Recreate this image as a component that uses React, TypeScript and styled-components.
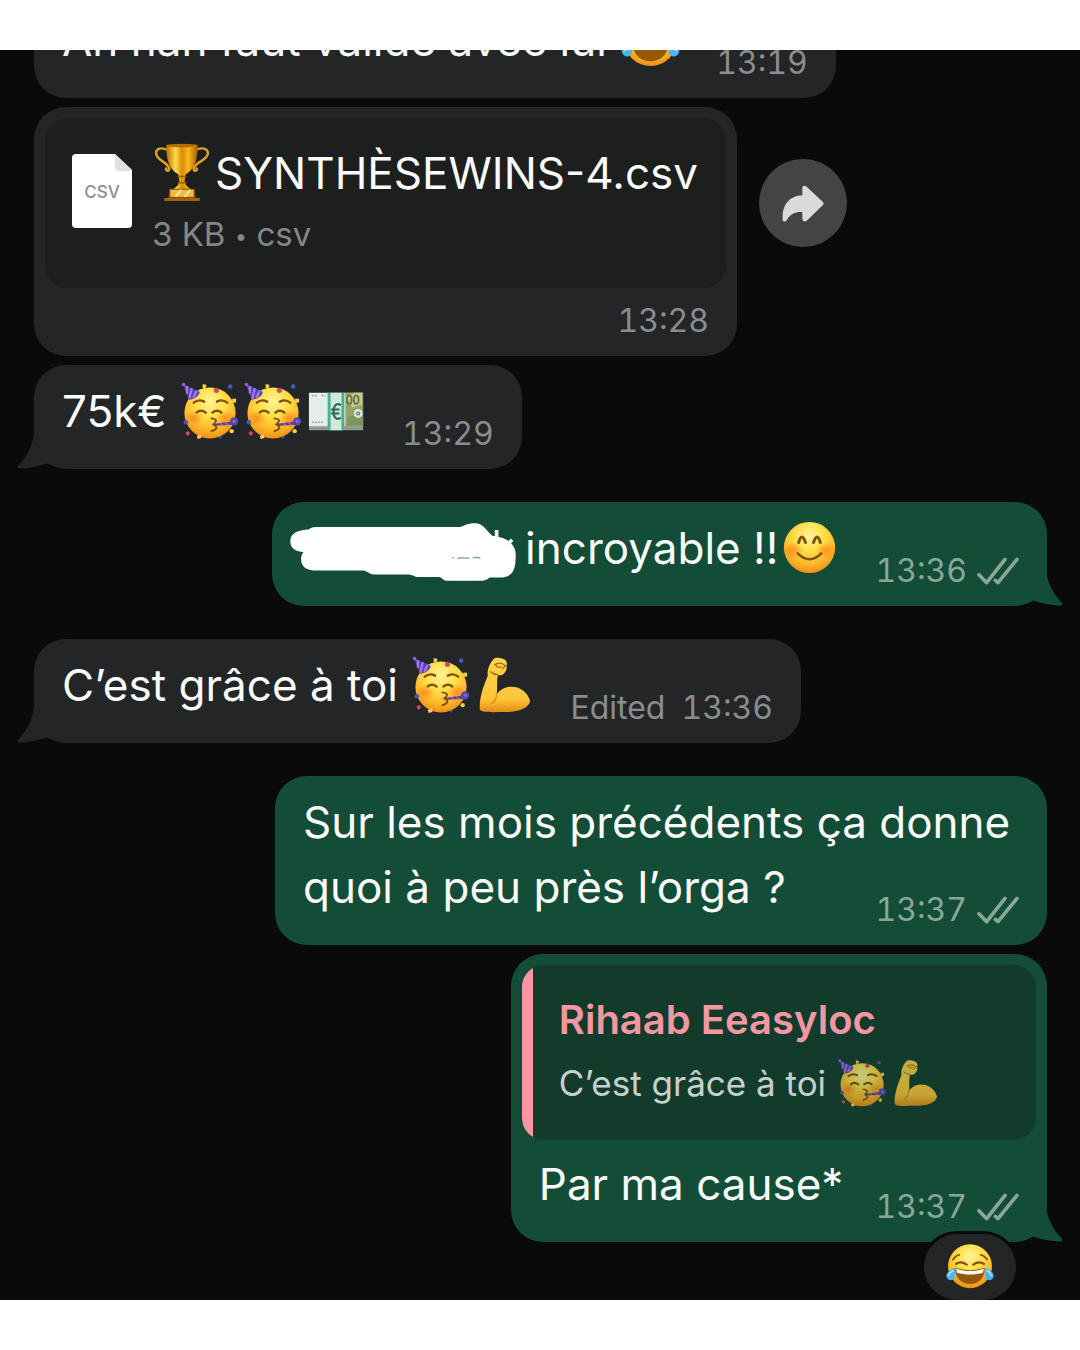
import React from "react";
import styled, { createGlobalStyle } from "styled-components";

const GlobalStyle = createGlobalStyle`
  *, *::before, *::after { box-sizing: border-box; }
  body {
    margin: 0;
    background: #fff;
    font-family: Inter, "Liberation Sans", sans-serif;
  }
  p, h2 { margin: 0; font-weight: 400; }
`;

type Side = "in" | "out";

const palette = {
  chat: "#0a0a0a",
  in: "#242526",
  out: "#144d37",
  inMeta: "#8b8c8d",
  outMeta: "#89a698",
};

const Page = styled.main`
  display: flex;
  flex-direction: column;
  height: 100vh;
  padding: 50px 0;
`;

const Chat = styled.section`
  flex: 1;
  min-height: 0;
  display: flex;
  flex-direction: column;
  justify-content: flex-end;
  padding: 0 33px 58px 34px;
  overflow: hidden;
  background: ${palette.chat};
`;

const Row = styled.div<{ $side: Side; $spaced?: boolean }>`
  flex: none;
  display: flex;
  align-items: flex-start;
  justify-content: ${(p) => (p.$side === "in" ? "flex-start" : "flex-end")};
  gap: 22px;
  margin-top: ${(p) => (p.$spaced ? 33 : 9)}px;
`;

const Bubble = styled.article<{ $side: Side }>`
  position: relative;
  max-width: 84%;
  border-radius: 32px;
  background: ${(p) => palette[p.$side]};
  color: #fafafa;
`;

const Line = styled.div<{ $afterBlock?: boolean }>`
  display: flex;
  align-items: flex-end;
  justify-content: space-between;
  gap: ${(p) => (p.$afterBlock ? 32 : 34)}px;
  padding: ${(p) => (p.$afterBlock ? 12 : 14)}px 28px 15px;
`;

const Text = styled.p`
  display: flex;
  align-items: center;
  padding-bottom: 10px;
  font-size: 44px;
  line-height: 65px;
  white-space: pre;
`;

const Paragraph = styled.div`
  max-width: 772px;
  padding: 14px 28px 25px;
  font-size: 44px;
  line-height: 65px;
`;

const FloatingMeta = styled.div`
  float: right;
  margin-top: 35px;
`;

const MetaRow = styled.footer<{ $side: Side }>`
  flex: none;
  display: flex;
  align-items: center;
  justify-content: flex-end;
  gap: ${(p) => (p.$side === "in" ? 16 : 10)}px;
  font-size: 32px;
  font-variant-numeric: tabular-nums;
  line-height: 40px;
  color: ${(p) => (p.$side === "in" ? palette.inMeta : palette.outMeta)};
`;

const FileMeta = styled.div`
  padding: 13px 28px 15px;
`;

const FileCard = styled.div`
  display: flex;
  gap: 20px;
  height: 170px;
  margin: 11px 11px 0;
  padding: 27px 28px 0 27px;
  border-radius: 22px;
  background: #1d1f1e;
`;

const FileBadge = styled.div`
  position: relative;
  flex: none;
  width: 60px;
  height: 74px;
  margin-top: 9px;

  svg { display: block; }
`;

const FileBadgeLabel = styled.span`
  position: absolute;
  inset: 0;
  font-size: 17px;
  font-weight: 500;
  line-height: 76px;
  text-align: center;
  color: #8d8f8f;
`;

const FileName = styled.h2`
  display: flex;
  align-items: center;
  height: 56px;
  font-size: 44px;
  line-height: 56px;
  white-space: nowrap;
`;

const FileInfo = styled.p`
  padding-top: 13px;
  font-size: 33px;
  line-height: 40px;
  color: #858686;
`;

const Dot = styled.span`
  font-size: 22px;
  vertical-align: 2px;
`;

const ForwardButton = styled.button`
  flex: none;
  display: grid;
  place-items: center;
  width: 88px;
  height: 88px;
  margin-top: 52px;
  padding: 0;
  border: 0;
  border-radius: 50%;
  background: #434446;
`;

const Quote = styled.blockquote`
  height: 175px;
  margin: 11px 11px 0;
  padding: 30px 90px 0 37px;
  border-radius: 22px;
  background: linear-gradient(to right, #fc95a2 11px, #123b2b 11px);
`;

const QuoteName = styled.p`
  font-size: 40px;
  font-weight: 600;
  line-height: 50px;
  color: #f497a2;
`;

const QuoteText = styled.p`
  display: flex;
  align-items: center;
  height: 64px;
  padding-top: 12px;
  font-size: 35px;
  line-height: 52px;
  white-space: pre;
  color: #fff;
  opacity: 0.76;
`;

const Reaction = styled.button`
  position: absolute;
  right: 28px;
  bottom: -61px;
  display: grid;
  place-items: center;
  width: 98px;
  height: 72px;
  padding: 0;
  border: 3px solid ${palette.chat};
  border-radius: 36px;
  background: #242626;
`;

const TailSvg = styled.svg<{ $side: Side }>`
  position: absolute;
  bottom: 0;
  ${(p) => (p.$side === "in" ? "left: -17px;" : "right: -16px; transform: scaleX(-1);")}
  fill: ${(p) => palette[p.$side]};
`;

const EmojiSvg = styled.svg`
  flex: none;
  display: block;
`;

const Scribble = styled.svg`
  flex: none;
  display: block;
  margin: 7px -4px 0 -11px;
`;

const Tail = ({ side }: { side: Side }) => (
  <TailSvg $side={side} width="48" height="41" viewBox="0 0 48 41" aria-hidden="true">
    <path d="M17 0C17 16 11 27 1 38C0 40 1 40.5 4 40.5C14 40 23 38 29.500 35.500L44 40L44 0Z" />
  </TailSvg>
);

const Ticks = () => (
  <svg width="42" height="28" viewBox="0 0 126 84" fill="none" stroke="currentColor" strokeWidth="11" strokeLinecap="round" strokeLinejoin="round" role="img" aria-label="Lu">
    <path d="M6 53L29 77L84 7" />
    <path d="M55 70L63 77L120 7" />
  </svg>
);

const Meta = ({ side, time, edited }: { side: Side; time: string; edited?: boolean }) => (
  <MetaRow $side={side}>
    {edited && <span>Edited</span>}
    <time>{time}</time>
    {side === "out" && <Ticks />}
  </MetaRow>
);

const FaceGradient = ({ id }: { id: string }) => (
  <defs>
    <radialGradient id={id} cx="50%" cy="28%" r="74%">
      <stop offset="0" stopColor="#fff39a" />
      <stop offset=".38" stopColor="#ffe04a" />
      <stop offset=".72" stopColor="#fdb92a" />
      <stop offset="1" stopColor="#ee8a12" />
    </radialGradient>
    <radialGradient id={`${id}-cheek`}>
      <stop offset="0" stopColor="#fb7a16" stopOpacity=".7" />
      <stop offset="1" stopColor="#fb7a16" stopOpacity="0" />
    </radialGradient>
  </defs>
);

const Party = ({ size = 63 }: { size?: number }) => {
  const id = React.useId();
  return (
    <EmojiSvg width={size} height={size} viewBox="0 0 64 64" role="img" aria-label="visage festif">
      <FaceGradient id={id} />
      <circle cx="31.500" cy="33.500" r="26" fill={`url(#${id})`} />
      <ellipse cx="15" cy="39" rx="10" ry="8" fill={`url(#${id}-cheek)`} />
      <ellipse cx="48" cy="39" rx="10" ry="8" fill={`url(#${id}-cheek)`} />
      <path d="M4 4L21 12C21 16 15 20 10 20Z" fill="#5046bd" />
      <path d="M8 6L8 14M13 8.500L10.500 19M18 11L14.500 18" stroke="#b673e4" strokeWidth="2.200" />
      <circle cx="4.600" cy="4.600" r="1.800" fill="#8c62dc" />
      <g fill="none" stroke="#80500f" strokeWidth="2.400" strokeLinecap="round">
        <path d="M15 23Q20 19 25.500 22" />
        <path d="M38.500 22Q44 19 49 23" />
        <path d="M18 33Q22 29.500 27 33" />
        <path d="M34 33Q38.500 29.500 43 33" />
        <path d="M33 39Q41 40 35 45Q42 49 33 52" strokeWidth="2" />
      </g>
      <path d="M36 44.500L55 42L56 45.500L37 46.500Z" fill="#4d43a5" />
      <path d="M42 44L44 46M47 43L50 46" stroke="#d35d8e" strokeWidth="1.500" />
      <circle cx="56" cy="42" r="4.200" fill="#5147b3" />
      <circle cx="56" cy="42" r="1.600" fill="#8f6acb" />
      <g fill="#d64565">
        <circle cx="38" cy="10.500" r="2.600" />
        <path d="M6.500 54L9 51.500L11.500 54L9 57Z" />
      </g>
      <g fill="#4059bd">
        <circle cx="52" cy="6.500" r="2.300" />
        <circle cx="7" cy="43" r="2.300" />
        <path d="M40 58L44 56L42 60Z" />
      </g>
      <g fill="#f5cf52">
        <path d="M24 4L28 5L27 8L24 8Z" />
        <rect x="54" y="19" width="4" height="4" />
        <circle cx="53.500" cy="52" r="2.200" />
        <path d="M18 57L22 55L23 59L19 60Z" />
      </g>
    </EmojiSvg>
  );
};

const Muscle = ({ size = 63 }: { size?: number }) => {
  const id = React.useId();
  return (
    <EmojiSvg width={size} height={size} viewBox="0 0 64 64" role="img" aria-label="biceps">
      <defs>
        <linearGradient id={id} x1="0" y1="0" x2="0" y2="1">
          <stop offset="0" stopColor="#ffd34a" />
          <stop offset=".75" stopColor="#ffc63a" />
          <stop offset="1" stopColor="#e58b16" />
        </linearGradient>
      </defs>
      <path
        d="M21 5C23 3 27 4 31 5C34 6 35 9 34 12C35 15 33 19 30 21C28 22 26 21 25 22C24 29 25 36 24 41C29 34 37 32 45 34C53 37 57 43 58 48C56 56 45 59 32 59C22 59 11 60 7 57C6 46 10 34 15 22C14 17 17 9 21 5Z"
        fill={`url(#${id})`}
      />
      <path d="M22 11Q26 8 30 10M23 11Q25 15 29 13M30 10L33 12L30 15M18 18Q21 21 25 21" fill="none" stroke="#a9640f" strokeWidth="1.200" strokeLinecap="round" />
      <path d="M24 41Q24 47 19 50" fill="none" stroke="#dd8c1a" strokeWidth="1.500" strokeLinecap="round" />
    </EmojiSvg>
  );
};

const Joy = ({ size = 63 }: { size?: number }) => {
  const id = React.useId();
  return (
    <EmojiSvg width={size} height={size} viewBox="0 0 64 64" role="img" aria-label="larmes de joie">
      <FaceGradient id={id} />
      <circle cx="32" cy="31" r="27" fill={`url(#${id})`} />
      <path d="M14 33C26 37 38 37 50 33C51 45 43 53 32 53C21 53 13 45 14 33Z" fill="#96590c" />
      <path d="M15 34C26 38 38 38 49 34L48 39C38 42 26 42 16 39Z" fill="#fff" />
      <g fill="none" stroke="#85500e" strokeLinecap="round">
        <path d="M15 28Q21 24 28 29" strokeWidth="2.800" />
        <path d="M36 29Q43 24 49 28" strokeWidth="2.800" />
        <path d="M11 23Q14 18 19 17" strokeWidth="2" />
        <path d="M45 17Q50 18 53 23" strokeWidth="2" />
      </g>
      <path d="M14 33C7 35 2 40 3 44C5 50 12 49 13 45C14 42 14 38 14 33Z" fill="#49b7ee" />
      <path d="M50 33C57 35 62 40 61 44C59 50 52 49 51 45C50 42 50 38 50 33Z" fill="#49b7ee" />
      <path d="M12 36C8 38 6 41 6 43M52 36C56 38 58 41 58 43" stroke="#a8e2fa" strokeWidth="2" fill="none" />
    </EmojiSvg>
  );
};

const Blush = () => {
  const id = React.useId();
  return (
    <EmojiSvg width="63" height="63" viewBox="0 0 64 64" role="img" aria-label="visage souriant">
      <FaceGradient id={id} />
      <circle cx="32" cy="31" r="26" fill={`url(#${id})`} />
      <ellipse cx="15" cy="34" rx="11" ry="9" fill={`url(#${id}-cheek)`} />
      <ellipse cx="49" cy="34" rx="11" ry="9" fill={`url(#${id}-cheek)`} />
      <g fill="none" stroke="#80500f" strokeWidth="3" strokeLinecap="round">
        <path d="M21 26Q24 14.500 28 26" />
        <path d="M36 26Q40 14.500 43 26" />
        <path d="M20 37Q32 49 44 37" strokeWidth="2.400" />
      </g>
    </EmojiSvg>
  );
};

const Euros = () => (
  <EmojiSvg width="63" height="63" viewBox="0 0 64 64" role="img" aria-label="billets en euros">
    <path d="M4 46H59V51H4Z" fill="#919995" />
    <path d="M4 13H59V47H4Z" fill="#e6eeea" />
    <path d="M41 13H59V47H41Z" fill="#93a466" />
    <path d="M42 17L50 13H58V25L48 28Z" fill="#c3c993" />
    <path d="M43 38L59 32V47H42Z" fill="#7f9660" />
    <circle cx="54" cy="34" r="4.500" fill="#dbe9de" />
    <circle cx="54" cy="34" r="1.500" fill="none" stroke="#3c7864" strokeWidth="1.200" />
    <g fill="none" stroke="#6b733c" strokeWidth="1.800">
      <ellipse cx="45" cy="20" rx="2.400" ry="4.200" />
      <ellipse cx="52" cy="20" rx="2.400" ry="4.200" />
    </g>
    <path d="M7 16H13M17 16H21M7 43H19" stroke="#a0aaa4" strokeWidth="1.500" strokeDasharray="2 1" />
    <path d="M23 13H40V51H23Z" fill="#4bb08d" />
    <path d="M26 13H37V51H26Z" fill="#cfe9dc" />
    <path d="M36.500 25.500C31 22.500 29 27 29 32C29 37 31 41.500 36.500 38.500M26.500 30H35M26.500 34H35" fill="none" stroke="#2b6855" strokeWidth="2.200" />
  </EmojiSvg>
);

const Trophy = () => {
  const id = React.useId();
  return (
    <EmojiSvg width="63" height="63" viewBox="0 0 62 62" role="img" aria-label="trophée">
      <defs>
        <linearGradient id={id}>
          <stop offset="0" stopColor="#bd6c00" />
          <stop offset=".3" stopColor="#ffdb4e" />
          <stop offset=".5" stopColor="#d88b04" />
          <stop offset=".7" stopColor="#f9b91f" />
          <stop offset="1" stopColor="#a85b00" />
        </linearGradient>
      </defs>
      <g fill="none" stroke="#dda126" strokeWidth="2.400" strokeLinecap="round">
        <path d="M16 8C9 5 4 6 4 11C4 18 15 19 17 26C17 29 13 29 14 26" />
        <path d="M42 8C49 5 55 6 55 11C55 18 43 19 41 26C41 29 45 29 44 26" />
      </g>
      <path d="M14 3H45C45 18 42 27 33 32L32 39C33 43 36 45 39 47H20C23 45 26 43 27 39L26 32C17 27 14 18 14 3Z" fill={`url(#${id})`} />
      <ellipse cx="29.500" cy="3.500" rx="15.500" ry="1.800" fill="#b76d05" />
      <path d="M25 34H34M25 40H34" stroke="#9c5900" strokeWidth="1.500" />
      <path d="M17 46H42L43 56H16Z" fill="#8a4b02" />
      <path d="M12 55H47V58H12Z" fill="#a66106" />
      <path d="M18 47H41V54H18Z" fill="#efbb46" />
      <path d="M23 54L29 47M32 54L38 47" stroke="#ffe497" strokeWidth="2" />
    </EmojiSvg>
  );
};

const HiddenName = () => (
  <Scribble width="228" height="58" viewBox="85 100 684 176" role="img" aria-label="nom masqué">
    <path
      d="M85 155C86 130 108 122 140 120C150 112 158 112 170 112H600C620 106 625 101 645 101C672 101 680 124 698 139C745 144 768 165 769 195C769 235 765 260 730 265H690C680 273 672 275 660 275H560C548 275 548 266 535 264H475C460 264 458 256 440 256H340C325 256 322 246 305 244H155C130 242 116 230 118 205C119 196 122 192 125 188C100 186 85 175 85 155Z"
      fill="#fff"
    />
    <path d="M711 121V148M740 170L758 151" stroke="#fafafa" strokeWidth="11" />
    <path d="M575 205L582 206M592 209L602 205L628 207M638 206L650 204L662 207" fill="none" stroke="#8aa89b" strokeWidth="4" />
  </Scribble>
);

export default function App() {
  return (
    <>
      <GlobalStyle />
      <Page>
        <Chat aria-label="Conversation">
          <Row $side="in">
            <Bubble $side="in">
              <Line>
                <Text>Ah nan faut valide avec lui <Joy /></Text>
                <Meta side="in" time="13:19" />
              </Line>
            </Bubble>
          </Row>

          <Row $side="in">
            <Bubble $side="in">
              <FileCard>
                <FileBadge>
                  <svg width="60" height="74" viewBox="0 0 60 74" aria-hidden="true">
                    <path d="M4 0H43L60 16V70Q60 74 56 74H4Q0 74 0 70V4Q0 0 4 0Z" fill="#fff" />
                    <path d="M43 0L60 16V17H47Q43 17 43 13Z" fill="#dfe1e0" />
                  </svg>
                  <FileBadgeLabel>CSV</FileBadgeLabel>
                </FileBadge>
                <div>
                  <FileName><Trophy />SYNTHÈSEWINS-4.csv</FileName>
                  <FileInfo>3 KB <Dot>•</Dot> csv</FileInfo>
                </div>
              </FileCard>
              <FileMeta>
                <Meta side="in" time="13:28" />
              </FileMeta>
            </Bubble>
            <ForwardButton type="button" aria-label="Transférer">
              <svg width="42" height="37" viewBox="0 0 126 111" fill="#d9dadb" aria-hidden="true">
                <path d="M2 105C-1 62 19 33 61 31V8C62 1 68 0 74 5L122 50Q127 55 122 61L76 106C69 112 62 109 61 102V81C40 80 27 85 15 104C12 111 4 112 2 105Z" />
              </svg>
            </ForwardButton>
          </Row>

          <Row $side="in">
            <Bubble $side="in">
              <Tail side="in" />
              <Line>
                <Text>75k€ <Party /><Party /><Euros /></Text>
                <Meta side="in" time="13:29" />
              </Line>
            </Bubble>
          </Row>

          <Row $side="out" $spaced>
            <Bubble $side="out">
              <Tail side="out" />
              <Line>
                <Text><HiddenName /> incroyable !!<Blush /></Text>
                <Meta side="out" time="13:36" />
              </Line>
            </Bubble>
          </Row>

          <Row $side="in" $spaced>
            <Bubble $side="in">
              <Tail side="in" />
              <Line>
                <Text>C’est grâce à toi <Party /><Muscle /></Text>
                <Meta side="in" time="13:36" edited />
              </Line>
            </Bubble>
          </Row>

          <Row $side="out" $spaced>
            <Bubble $side="out">
              <Paragraph>
                <span>Sur les mois précédents ça donne quoi à peu près l’orga ?</span>
                <FloatingMeta>
                  <Meta side="out" time="13:37" />
                </FloatingMeta>
              </Paragraph>
            </Bubble>
          </Row>

          <Row $side="out">
            <Bubble $side="out">
              <Tail side="out" />
              <Quote>
                <QuoteName>Rihaab Eeasyloc</QuoteName>
                <QuoteText>C’est grâce à toi <Party size={53} /><Muscle size={53} /></QuoteText>
              </Quote>
              <Line $afterBlock>
                <Text>Par ma cause*</Text>
                <Meta side="out" time="13:37" />
              </Line>
              <Reaction type="button" aria-label="Réaction">
                <Joy size={52} />
              </Reaction>
            </Bubble>
          </Row>
        </Chat>
      </Page>
    </>
  );
}
